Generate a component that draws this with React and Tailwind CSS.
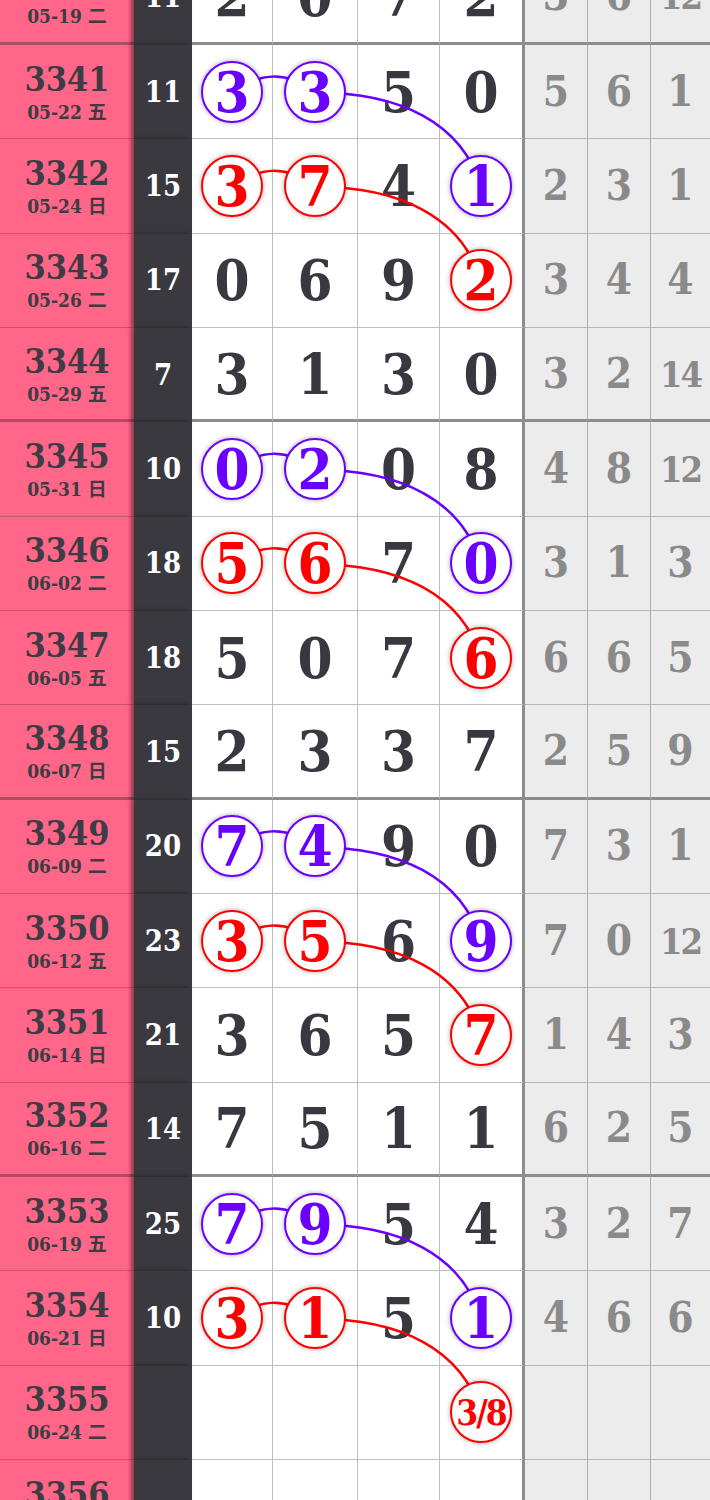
const H = 94.333;

// c: 'p' purple circle, 'r' red circle
const rows = [
  { no: '3340', date: '05-19 二', sum: '11', nums: ['2', '0', '7', '2'], grey: ['3', '6', '12'], end: true },
  { no: '3341', date: '05-22 五', sum: '11', nums: ['3p', '3p', '5', '0'], grey: ['5', '6', '1'] },
  { no: '3342', date: '05-24 日', sum: '15', nums: ['3r', '7r', '4', '1p'], grey: ['2', '3', '1'] },
  { no: '3343', date: '05-26 二', sum: '17', nums: ['0', '6', '9', '2r'], grey: ['3', '4', '4'] },
  { no: '3344', date: '05-29 五', sum: '7', nums: ['3', '1', '3', '0'], grey: ['3', '2', '14'], end: true },
  { no: '3345', date: '05-31 日', sum: '10', nums: ['0p', '2p', '0', '8'], grey: ['4', '8', '12'] },
  { no: '3346', date: '06-02 二', sum: '18', nums: ['5r', '6r', '7', '0p'], grey: ['3', '1', '3'] },
  { no: '3347', date: '06-05 五', sum: '18', nums: ['5', '0', '7', '6r'], grey: ['6', '6', '5'] },
  { no: '3348', date: '06-07 日', sum: '15', nums: ['2', '3', '3', '7'], grey: ['2', '5', '9'], end: true },
  { no: '3349', date: '06-09 二', sum: '20', nums: ['7p', '4p', '9', '0'], grey: ['7', '3', '1'] },
  { no: '3350', date: '06-12 五', sum: '23', nums: ['3r', '5r', '6', '9p'], grey: ['7', '0', '12'] },
  { no: '3351', date: '06-14 日', sum: '21', nums: ['3', '6', '5', '7r'], grey: ['1', '4', '3'] },
  { no: '3352', date: '06-16 二', sum: '14', nums: ['7', '5', '1', '1'], grey: ['6', '2', '5'], end: true },
  { no: '3353', date: '06-19 五', sum: '25', nums: ['7p', '9p', '5', '4'], grey: ['3', '2', '7'] },
  { no: '3354', date: '06-21 日', sum: '10', nums: ['3r', '1r', '5', '1p'], grey: ['4', '6', '6'] },
  { no: '3355', date: '06-24 二', sum: '', nums: ['', '', '', '3/8r'], grey: ['', '', ''] },
  { no: '3356', date: '06-26 五', sum: '', nums: ['', '', '', ''], grey: ['', '', ''] },
];

const colW = ['w-[81px]', 'w-[85px]', 'w-[82px]', 'w-[85px]'];
const X1 = 232.5;
const X2 = 315.5;
const X4 = 481;

const Circle = ({ text, color }) => {
  const purple = color === 'p';
  const small = text.length > 1;
  return (
    <span
      className={`relative z-20 flex h-[62px] w-[62px] items-center justify-center rounded-full border-[2.5px] bg-white leading-none shadow-[0_0_5px_rgba(0,0,0,0.35)] ${
        purple ? 'border-[#6a00ff] text-[#6a00ff]' : 'border-[#ff0000] text-[#ff0000]'
      } ${small ? 'text-[35px] tracking-[-2px]' : 'text-[56px]'}`}
    >
      {text}
    </span>
  );
};

const links = (r, color) => {
  const cy = r * H + H / 2;
  const ny = cy + H;
  return (
    <g key={r} stroke={color} strokeWidth="2.5" fill="none">
      <path d={`M ${X1} ${cy} Q ${(X1 + X2) / 2} ${cy - 32} ${X2} ${cy}`} />
      <path d={`M ${X2} ${cy} C 400 ${cy}, 462 ${cy + 30}, ${X4} ${ny}`} />
    </g>
  );
};

export default function App() {
  return (
    <div className="h-[1500px] w-[710px] overflow-hidden bg-white font-['DejaVu_Serif','Noto_Sans_CJK_SC',serif] font-stretch-condensed">
      <div className="relative mt-[-49.33px]">
        {rows.map((row) => (
          <div key={row.no} className="flex h-[94.33px]">
            {/* issue no + date */}
            <div
              className={`flex w-[134px] shrink-0 flex-col items-center justify-center bg-[#ff6688] text-[#3d3c44] ${
                row.end ? 'border-b-[3px] border-[#b14a63]' : 'border-b border-[#c9566f]'
              }`}
            >
              <span className="text-[34px] font-semibold leading-none">{row.no}</span>
              <span className="mt-[7px] text-[19px] font-bold leading-none">{row.date}</span>
            </div>
            {/* sum */}
            <div className="relative z-[1] flex w-[58px] shrink-0 items-center justify-center bg-[#3a393f] text-[29px] font-bold leading-none text-white shadow-[-3px_0_4px_rgba(0,0,0,0.45)]">
              {row.sum}
            </div>
            {/* numbers */}
            {row.nums.map((n, i) => {
              const c = n.endsWith('p') ? 'p' : n.endsWith('r') ? 'r' : null;
              const v = c ? n.slice(0, -1) : n;
              return (
                <div
                  key={i}
                  className={`flex shrink-0 items-center justify-center bg-white text-[56px] font-bold leading-none text-[#393840] ${colW[i]} ${
                    i === 3 ? 'border-r-[3px] border-r-[#8c8c8c]' : 'border-r border-r-[#bdbdbd]'
                  } ${row.end ? 'border-b-[3px] border-b-[#8c8c8c]' : 'border-b border-b-[#bdbdbd]'}`}
                >
                  {c ? <Circle text={v} color={c} /> : v}
                </div>
              );
            })}
            {/* misses */}
            {row.grey.map((g, i) => (
              <div
                key={i}
                className={`flex items-center justify-center bg-[#ececec] font-bold leading-none text-[#8a8a8a] ${
                  i === 2 ? 'flex-1' : 'w-[63px] shrink-0 border-r border-r-[#aaaaaa]'
                } ${g.length > 1 ? 'text-[36px] tracking-[-2px]' : 'text-[42px]'} ${
                  row.end ? 'border-b-[3px] border-b-[#8c8c8c]' : 'border-b border-b-[#b5b5b5]'
                }`}
              >
                {g}
              </div>
            ))}
          </div>
        ))}

        <svg className="pointer-events-none absolute left-0 top-0 z-10" width="710" height={rows.length * H}>
          {[1, 5, 9, 13].map((r) => links(r, '#6a00ff'))}
          {[2, 6, 10, 14].map((r) => links(r, '#ff0000'))}
        </svg>
      </div>
    </div>
  );
}
